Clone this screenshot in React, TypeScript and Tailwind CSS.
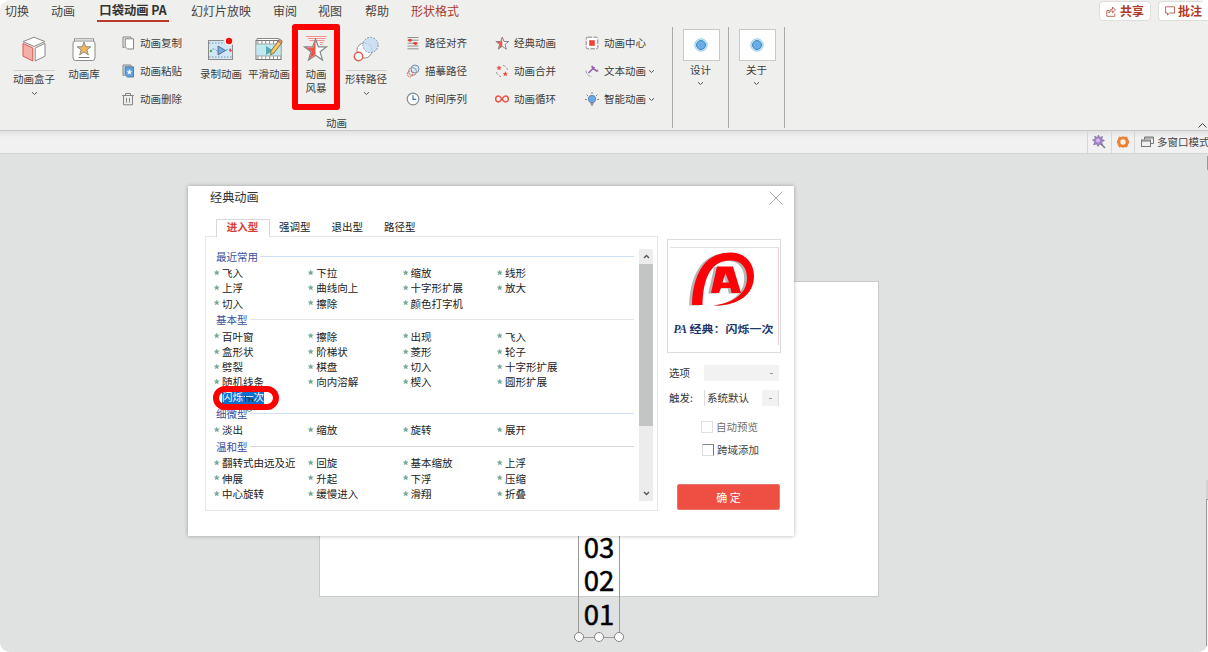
import React from "react";

const FONT = "font-['Noto_Sans_CJK_SC','Noto_Sans',sans-serif]";

function Chevron({ className = "" }: { className?: string }) {
  return (
    <svg className={`block h-[5px] w-[7px] shrink-0 ${className}`} viewBox="0 0 7 5" fill="none" stroke="#555" strokeWidth="1">
      <path d="M1 1.2 3.5 3.5 6 1.2" />
    </svg>
  );
}

const STAR = "M0-10 2.6-3.2 9.8-3.2 4.1 1.2 6.2 8.4 0 4.2-6.2 8.4-4.1 1.2-9.8-3.2-2.6-3.2Z";

const CubeIcon = () => (
  <svg width="26" height="26" viewBox="0 0 26 26" strokeLinejoin="round">
    <path d="M13 1.2 24 5.6 13 10.4 2 5.6Z" fill="#fff" stroke="#8a8a8a" />
    <path d="M14.2 12 24 7.4V20.2L14.2 25Z" fill="#fff" stroke="#8a8a8a" />
    <path d="M2 7.4 11.8 12V25L2 20.2Z" fill="#f3b0a9" stroke="#e2584c" />
  </svg>
);
const LibraryIcon = () => (
  <svg width="26" height="26" viewBox="0 0 26 26" fill="#fff" stroke="#8a8a8a">
    <path d="M3.5 5V2.8H22.5V5" />
    <rect x="2" y="5" width="22" height="19.5" rx="2.5" />
    <path transform="translate(13 13) scale(.7)" d={STAR} fill="#f2b95a" stroke="#8a8a8a" strokeWidth="1.4" />
    <path d="M7.5 21.5H18.5" stroke="#777" />
  </svg>
);
const RecordIcon = () => (
  <svg width="28" height="26" viewBox="0 0 28 26">
    <rect x="1.5" y="4.5" width="24" height="19" fill="#cfe7f7" stroke="#8a8a8a" />
    <path d="M2 7H25M2 21H25" stroke="#9fb0ba" strokeDasharray="1.5 1.5" strokeWidth="1.6" />
    <path d="M3 16Q6 11 9 14T17 15T24 13" fill="none" stroke="#4f86b8" strokeDasharray="2 1.5" />
    <path d="M11 10V19L18.5 14.5Z" fill="#6fb0e2" stroke="#557" strokeWidth=".8" />
    <circle cx="4" cy="15" r="1.2" fill="#4caf50" />
    <circle cx="23.5" cy="14.5" r="1.2" fill="#f33" />
    <circle cx="22" cy="5" r="5" fill="#fbf6f5" stroke="#ddd" strokeWidth=".6" />
    <circle cx="22" cy="5" r="3.2" fill="#f20d0d" />
  </svg>
);
const SmoothIcon = () => (
  <svg width="28" height="26" viewBox="0 0 28 26">
    <path d="M2 4V2.5H24V4" fill="#fff" stroke="#8a8a8a" />
    <rect x="1" y="4.5" width="25" height="19" fill="#fff" stroke="#777" />
    <rect x="1.5" y="8" width="24" height="12" fill="#bfe9ef" />
    <path d="M1 8H26M1 20H26" stroke="#888" strokeWidth=".7" />
    <path d="M2.5 6.2H26M2.5 21.8H26" stroke="#888" strokeWidth="3" strokeDasharray=".9 3" />
    <path d="M11 10V19L18 14.5Z" fill="#55a9b2" />
    <path d="M23.5 4.8 26.5 7.2 19 17 15.6 18.8 16 14.8Z" fill="#f6c665" stroke="#80663d" strokeWidth=".9" />
    <path d="M23.2 5.2 24.6 3.5Q26.6 3.5 27.4 5.8L26.2 7.5Z" fill="#e98f7d" stroke="#80663d" strokeWidth=".7" />
  </svg>
);
const StormIcon = () => (
  <svg width="26" height="27" viewBox="0 0 26 27">
    <path d="M3 1.5H23.500M5 3.500H22.500M6.500 5.500H21.500M17 7.500H20.500M17 9.500H19.500" stroke="#f0938c" strokeWidth="1.2" />
    <g transform="translate(12.500 15.5) scale(1.12)">
      <path d={STAR} fill="#fff" stroke="#858585" strokeWidth="1.1" />
      <path d="M0-9.2V3.6L-5.4 7.2-3.5 1-8.6-2.7-2.1-2.7Z" fill="#ee5549" />
    </g>
  </svg>
);
const ShapePathIcon = () => (
  <svg width="28" height="27" viewBox="0 0 28 27">
    <circle cx="12.500" cy="14.500" r="7.6" fill="#fff" stroke="#909090" />
    <circle cx="18.5" cy="9" r="7.6" fill="#c4dcf4" fillOpacity=".8" stroke="#8098b0" strokeDasharray="2 1.2" />
    <circle cx="6.5" cy="20.5" r="4.2" fill="#fff" stroke="#ea5a4f" strokeWidth="1.4" />
  </svg>
);

const smallIcons: Record<string, React.ReactNode> = {
  copy: (
    <g fill="#fff" stroke="#858585">
      <path d="M10 2V1H2V11.5H3.5" fill="none" />
      <path d="M4.2 2.8H12.5V13H6.5L4.2 11Z" />
    </g>
  ),
  paste: (
    <g stroke="#858585">
      <path d="M10 2V1H2V11.5H3.5" fill="#d8d8d8" />
      <path d="M4.2 2.8H12.5V13H6.5L4.2 11Z" fill="#5d9fe0" stroke="#557ea8" />
      <path transform="translate(8.400 8) scale(.27)" d={STAR} fill="#fff" stroke="#fff" />
    </g>
  ),
  trash: (
    <g fill="none" stroke="#858585">
      <path d="M1.2 3.5H12.8M4.5 3.2V1.5H9.5V3.2M2.5 3.8V12.8H11.5V3.8M5.5 6V10.5M8.5 6V10.5" />
    </g>
  ),
  align: (
    <g fill="none" stroke="#858585">
      <path d="M1.5 1.5H12.5M1.5 4.2H12.5M1.5 7.2H12.5M1.5 10H12.5M1.5 12.8H12.5" strokeWidth=".9" />
      <path d="M2 4.2H6M7 7.2H11" stroke="#e94036" strokeWidth="1.500" />
      <circle cx="4" cy="4.2" r="1.5" fill="#e94036" stroke="none" />
      <circle cx="9.5" cy="7.4" r="1.5" fill="#e94036" stroke="none" />
    </g>
  ),
  trace: (
    <g fill="none">
      <circle cx="9" cy="5" r="4" fill="#d9e6f4" stroke="#7892b2" />
      <circle cx="6.5" cy="7.5" r="4" stroke="#999" />
      <circle cx="4" cy="10" r="2.8" stroke="#ea5a4f" strokeDasharray="2 .8" />
    </g>
  ),
  clock: (
    <g fill="#fff" stroke="#858b92">
      <circle cx="7" cy="7" r="5.8" strokeWidth="1.2" />
      <path d="M7 3.2V7.3H10.3" fill="none" stroke="#3e7ab8" strokeWidth="1.2" />
    </g>
  ),
  star: (
    <g transform="translate(7.300 7.6) scale(.66)">
      <path d={STAR} fill="#fff" stroke="#858585" strokeWidth="1.5" />
      <path d="M0-9V4L-5.4 7.2-3.5 1-8.6-2.7-2.1-2.7Z" fill="#ee5549" />
    </g>
  ),
  merge: (
    <g fill="none" stroke="#9a9a9a">
      <path d="M8 1.3A6 6 0 0 1 12.5 6M1.5 8A6 6 0 0 0 6 12.7" strokeDasharray="3 1.4" />
      <path transform="translate(4 4) scale(.24)" d={STAR} fill="#ed3f35" stroke="#ed3f35" />
      <path transform="translate(10.3 10) scale(.24)" d={STAR} fill="#ed3f35" stroke="#ed3f35" />
    </g>
  ),
  loop: (
    <path
      d="M7 7C5.5 5 4.8 4 3.6 4A3 3 0 0 0 3.6 10C4.8 10 5.5 9 7 7S9.200 4 10.4 4A3 3 0 0 1 10.4 10C9.200 10 8.500 9 7 7Z"
      fill="none"
      stroke="#e95247"
      strokeWidth="1.5"
    />
  ),
  center: (
    <g>
      <rect x="1.200" y="1.200" width="11.600" height="11.600" rx="1.500" fill="#fff" stroke="#858585" strokeDasharray="4.5 1.2" />
      <rect x="4.200" y="4.200" width="5.600" height="5.600" fill="#f04437" />
    </g>
  ),
  text: (
    <g fill="none">
      <path d="M1 6.500A6.200 6.200 0 0 0 6.500 12.600M13 7.500 12.500 5.500" stroke="#999" strokeDasharray="3 1" />
      <path d="M3.500 9 9.500 3M6.800 1.800 8 4.500 12.500 7.500" stroke="#9561b5" strokeWidth="1.700" />
    </g>
  ),
  bulb: (
    <g>
      <path d="M7 0V2M1.500 2.500 3 4M12.500 2.500 11 4M0 7.500H2M12 7.500H14" stroke="#888" />
      <circle cx="7" cy="7" r="3.700" fill="#65a9e8" stroke="#5b7fa5" strokeWidth=".8" />
      <path d="M5.400 11.200H8.600M5.800 12.900H8.200" stroke="#777" strokeWidth="1.200" />
    </g>
  ),
};

function SmallColumn({ items, className }: { items: [string, string, boolean?][]; className: string }) {
  return (
    <div className={`flex shrink-0 flex-col pt-[7px] ${className}`}>
      {items.map(([icon, label, menu]) => (
        <button key={label} className="flex h-7 items-center whitespace-nowrap">
          <svg className="mr-[5px] shrink-0" width="14" height="14" viewBox="0 0 14 14">
            {smallIcons[icon]}
          </svg>
          <span>{label}</span>
          {menu && <Chevron className="ml-[2px]" />}
        </button>
      ))}
    </div>
  );
}

function LargeButton({ icon, label, split, className }: { icon: React.ReactNode; label: string; split?: boolean; className: string }) {
  return (
    <button className={`flex shrink-0 flex-col items-center whitespace-nowrap pt-[13px] leading-[14px] ${className}`}>
      <span className="flex h-7 items-center">{icon}</span>
      {split ? (
        <>
          <span className="mt-[7px] h-px w-[41px] bg-[#cfcfcf]" />
          <span className="mt-[1px]">{label}</span>
          <Chevron className="mt-[5px]" />
        </>
      ) : (
        <span className="mt-1">{label}</span>
      )}
    </button>
  );
}

function GalleryButton({ label }: { label: string }) {
  return (
    <div className="mt-[5px] flex h-[101px] w-14 shrink-0 flex-col items-center border-r border-[#a9a9a9] pt-[2px]">
      <div className="ml-px flex h-[32px] w-[37px] items-center justify-center border border-[#c9c9c6] bg-white">
        <svg width="14" height="14" viewBox="0 0 14 14">
          <circle cx="7" cy="7" r="6.200" fill="#d9f0fa" stroke="#8fc8e3" />
          <circle cx="7" cy="7" r="4.500" fill="#69aee8" stroke="#3f85bd" />
        </svg>
      </div>
      <span className="mt-[2px] leading-[14px]">{label}</span>
      <Chevron className="mt-[4px]" />
    </div>
  );
}

const tabs: [string, string][] = [
  ["切换", "ml-[5px]"],
  ["动画", "ml-[22px]"],
  ["口袋动画 PA", "ml-[22px]"],
  ["幻灯片放映", "ml-[22px]"],
  ["审阅", "ml-[22px]"],
  ["视图", "ml-[21px]"],
  ["帮助", "ml-[23px]"],
  ["形状格式", "ml-[22px]"],
];

function TabBar() {
  return (
    <div className="flex h-[22px] shrink-0 text-[12px] leading-[21px] text-[#444]">
      {tabs.map(([label, ml], i) => (
        <div
          key={label}
          className={`shrink-0 whitespace-nowrap ${ml} ${
            i === 2 ? "h-[21.500px] w-[72px] border-b-2 border-[#b83b2a] text-center text-[12.300px] font-bold text-[#333]" : i === 7 ? "text-[#a93a2b]" : ""
          }`}
        >
          {label}
        </div>
      ))}
      <div className="ml-auto flex shrink-0 gap-[7px] pt-px font-bold text-[#b03a2a]">
        <div className="flex h-5 w-[52px] items-center justify-center gap-[4px] rounded-sm border border-[#dededc] bg-white">
          <svg width="10" height="11" viewBox="0 0 10 11" fill="none" stroke="#b85a4d" strokeWidth=".9">
            <path d="M3 4.500H.8V10.300H8.800V7.500M2.800 7C3 4.500 4.500 3.200 6.500 3.200V1L9.500 4 6.500 6.800V4.900C4.800 4.900 3.500 5.500 2.800 7Z" />
          </svg>
          <span className="-mt-[2px]">共享</span>
        </div>
        <div className="flex h-5 w-[50px] items-center gap-[3px] whitespace-nowrap rounded-l-sm border border-r-0 border-[#dededc] bg-white pl-[6px]">
          <svg className="shrink-0" width="10" height="10" viewBox="0 0 10 10" fill="none" stroke="#b85a4d" strokeWidth=".9">
            <path d="M.6.8H9.500V7H4.500L2.500 9.200V7H.6Z" />
          </svg>
          <span className="-mt-[2px]">批注</span>
        </div>
      </div>
    </div>
  );
}

function Ribbon() {
  return (
    <div className="flex h-[109px] shrink-0 border-b border-[#c6c6c6] text-[10.500px] leading-[14px] text-[#3c3c3c]">
      <div className="flex w-[673px] shrink-0 flex-col">
        <div className="flex h-[92px]">
          <LargeButton className="ml-[13px] w-[42px]" icon={<CubeIcon />} label="动画盒子" split />
          <LargeButton className="ml-[12px] w-[34px]" icon={<LibraryIcon />} label="动画库" />
          <SmallColumn className="ml-[20px] w-[61px]" items={[["copy", "动画复制"], ["paste", "动画粘贴"], ["trash", "动画删除"]]} />
          <LargeButton className="ml-[18px] w-[42px]" icon={<RecordIcon />} label="录制动画" />
          <LargeButton className="ml-[6px] w-[42px]" icon={<SmoothIcon />} label="平滑动画" />
          <button className="ml-[2px] mt-[2px] flex h-[86px] w-[48px] shrink-0 flex-col items-center rounded-[3px] border-[6px] border-[#fe0000] pt-[5px]">
            <StormIcon />
            <span className="mt-[5px] w-[22px] leading-[14px]">动画风暴</span>
          </button>
          <LargeButton className="ml-[5px] w-[42px]" icon={<ShapePathIcon />} label="形转路径" split />
          <SmallColumn className="ml-[19px] w-[61px]" items={[["align", "路径对齐"], ["trace", "描摹路径"], ["clock", "时间序列"]]} />
          <SmallColumn className="ml-[28px] w-[62px]" items={[["star", "经典动画"], ["merge", "动画合并"], ["loop", "动画循环"]]} />
          <SmallColumn className="ml-[28px] w-[72px]" items={[["center", "动画中心"], ["text", "文本动画", true], ["bulb", "智能动画", true]]} />
        </div>
        <div className="text-center leading-[19px]">动画</div>
      </div>
      <div className="mt-[5px] h-[101px] w-px shrink-0 -ml-px bg-[#a9a9a9]" />
      <GalleryButton label="设计" />
      <GalleryButton label="关于" />
      <div className="flex grow items-end justify-end">
        <svg className="mb-px" width="11" height="7" viewBox="0 0 11 7" fill="none" stroke="#444">
          <path d="M1.500 5.500 5.500 1.500 9.500 5.500" />
        </svg>
      </div>
    </div>
  );
}

function ModeBar() {
  return (
    <div className="flex h-[23px] shrink-0 justify-end border-b border-[#d4d4d4] bg-gradient-to-b from-[#e2e2e2] to-[#f1f1f1] to-30% text-[10.500px] text-[#444]">
      <div className="flex w-6 items-center justify-center border-l border-[#d6d6d6] pr-[2px]">
        <svg width="14" height="14" viewBox="0 0 14 14">
          <path d="M8 8 13 13" stroke="#858585" strokeWidth="1.700" />
          <path d="M6.500 0 7.600 2.500 10.500 1.500 9.700 4.200 12.500 5.500 9.700 7 10.500 10 7.600 9 6 11.500 4.700 9 1.500 9.700 3 7 .5 5 3.200 4 2.700 1.300 5.400 2.500Z" fill="#a284cf" stroke="#776694" strokeWidth=".6" />
          <circle cx="6" cy="5.500" r="2" fill="#d8b8f3" />
        </svg>
      </div>
      <div className="flex w-6 items-center justify-center border-x border-[#d6d6d6] pr-px">
        <svg className="shrink-0" width="14" height="14" viewBox="0 0 14 14">
          <path d="M3 1.500 5 2 7 1.200 9 2 11 1.500 12 4 13.300 7 12 10 11 12.500 9 12 7 12.800 5 12 3 12.500 2 10 .7 7 2 4Z" fill="#ed8133" />
          <circle cx="7" cy="7" r="2.700" fill="#f5f2ef" />
        </svg>
      </div>
      <div className="flex w-[73px] items-center gap-[3px] overflow-hidden whitespace-nowrap pl-[6px]">
        <svg className="shrink-0" width="13" height="12" viewBox="0 0 13 12" fill="none" stroke="#777">
          <path d="M3.500 3.500V1H12.500V7.500H10M3.500 2H12.500" />
          <rect x=".5" y="4" width="9" height="6.500" />
          <path d="M.5 5H9.500" />
        </svg>
        多窗口模式
      </div>
    </div>
  );
}

const sections: { title: string; line: string; rows: string[][] }[] = [
  {
    title: "最近常用",
    line: "bg-[#cfe0f6]",
    rows: [
      ["飞入", "下拉", "缩放", "线形"],
      ["上浮", "曲线向上", "十字形扩展", "放大"],
      ["切入", "擦除", "颜色打字机"],
    ],
  },
  {
    title: "基本型",
    line: "bg-[#e2e5e9]",
    rows: [
      ["百叶窗", "擦除", "出现", "飞入"],
      ["盒形状", "阶梯状", "菱形", "轮子"],
      ["劈裂", "棋盘", "切入", "十字形扩展"],
      ["随机线条", "向内溶解", "楔入", "圆形扩展"],
      ["闪烁一次"],
    ],
  },
  { title: "细微型", line: "bg-[#cfe0f6]", rows: [["淡出", "缩放", "旋转", "展开"]] },
  {
    title: "温和型",
    line: "bg-[#d5d7da]",
    rows: [
      ["翻转式由远及近", "回旋", "基本缩放", "上浮"],
      ["伸展", "升起", "下浮", "压缩"],
      ["中心旋转", "缓慢进入", "滑翔", "折叠"],
    ],
  },
];

function Effect({ name }: { name: string }) {
  const selected = name === "闪烁一次";
  return (
    <div className="relative flex w-[94.300px] shrink-0 items-center whitespace-nowrap">
      <svg className="ml-px mr-[2.500px] shrink-0" width="5.500" height="5.500" viewBox="-10 -10 20 20">
        <path d={STAR} fill="#71a894" stroke="#71a894" strokeWidth="1" />
      </svg>
      <span className={selected ? "bg-[#0f6fd2] leading-[14px] text-white" : ""}>{name}</span>
      {selected && (
        <>
          <div className="absolute left-0 -top-[4.500px] h-[24px] w-[66px] rounded-full border-[6.500px] border-[#fe0000]" />
          <svg className="absolute left-[31px] top-[5px]" width="15" height="20" viewBox="0 0 15 20" fill="none">
            <path d="M1.500 .5V7M3 2.500H5V7M5 4H8.500V7" stroke="#333" strokeWidth="1" />
            <path d="M1 13.500Q5.500 20 10 12.500" stroke="#666" strokeWidth=".8" />
          </svg>
        </>
      )}
    </div>
  );
}

function EffectList() {
  return (
    <div className="flex h-[275px] w-[453px] border border-[#e6e6e6]">
      <div className="mt-[10.500px] w-[433px] shrink-0 pl-[7px] text-[10.500px] text-[#222]">
        {sections.map((s) => (
          <div key={s.title}>
            <div className="flex h-[17.600px] items-center pl-[3px] pr-[5px] leading-[17px] text-[#3a4f9c]">
              {s.title}
              <span className={`ml-[2px] h-px grow ${s.line}`} />
            </div>
            {s.rows.map((row) => (
              <div key={row[0]} className="flex h-[15.250px] items-center leading-[15px]">
                {row.map((name) => (
                  <Effect key={name} name={name} />
                ))}
              </div>
            ))}
          </div>
        ))}
      </div>
      <div className="mt-[12px] flex h-[252px] w-[14px] flex-col items-center bg-[#ececec]">
        <svg className="my-[5px] shrink-0" width="7" height="5" viewBox="0 0 7 5" fill="none" stroke="#555" strokeWidth="1.400">
          <path d="M1 4 3.500 1.500 6 4" />
        </svg>
        <div className="h-[162px] w-full bg-[#c3c4c4]" />
        <svg className="mb-[5px] mt-auto" width="7" height="5" viewBox="0 0 7 5" fill="none" stroke="#555" strokeWidth="1.400">
          <path d="M1 1 3.500 3.500 6 1" />
        </svg>
      </div>
    </div>
  );
}

function Preview() {
  return (
    <div className="h-[114px] w-[114px] border border-[#dcdcdc] pl-[2px] pt-[7px]">
      <div className="flex h-[98px] w-[109px] flex-col items-center border-r border-t border-r-[#e8cfd4] border-t-[#e2e2e2]">
        <svg className="mr-[4px] mt-[4px] shrink-0" width="68" height="56" viewBox="688 252 68 56">
          <g transform="translate(-2.800 .6)" fill="#b5b5b5">
            <path d="M692 305C692 288 697 271 706 262C713 255 722 252.500 731 252.500C745 252.500 754 263 754 276C754 295 738 306 716 305.500C733 303 747 294 747 278C747 266 740 260.500 730 260.500C713 260.500 703 275 702.500 305Z" />
            <path d="M717 266.500H733L741 293H731.500L730.500 288H721L719 293H711ZM725.500 273 722.500 282.500H729Z" fillRule="evenodd" />
          </g>
          <path d="M692 305C692 288 697 271 706 262C713 255 722 252.500 731 252.500C745 252.500 754 263 754 276C754 295 738 306 713 305.500C733 303 747 294 747 278C747 266 740 260.500 730 260.500C713 260.500 703 275 702.500 305Z" fill="#fe0008" />
          <path d="M717 266.500H733L741 293H731.500L730.500 288H721L719 293H711ZM725.500 273 722.500 282.500H729Z" fill="#fe0008" fillRule="evenodd" />
        </svg>
        <div className="mt-[12px] flex items-center whitespace-nowrap text-[12px] font-bold leading-[18px] text-[#20376b]">
          <span className="w-[16px] font-['Liberation_Serif',serif] text-[11.500px] italic tracking-[-0.5px]">PA</span>
          <span className="inline-block w-[85px] scale-y-[.82]">经典：闪烁一次</span>
        </div>
      </div>
    </div>
  );
}

function Dialog() {
  return (
    <div className="absolute left-[188px] top-[32px] flex h-[350px] w-[606px] flex-col bg-white shadow-[0_0_4px_rgba(0,0,0,0.3)]">
      <div className="flex h-[33px] shrink-0 justify-between pl-[22px] pr-[11px]">
        <span className="text-[12.200px] leading-[22px] text-[#333]">经典动画</span>
        <svg className="mt-[5px]" width="14" height="14" viewBox="0 0 14 14" stroke="#aaa" fill="none">
          <path d="M.5.5 13.500 13.500M13.500.5.5 13.500" />
        </svg>
      </div>
      <div className="flex pl-[17px]">
        <div className="w-[453px] shrink-0">
          <div className="flex h-[17px] pl-[11px] text-[10.500px] leading-[16px] text-[#222]">
            <span className="relative z-10 -mb-px w-[54px] border border-b-0 border-[#d8d8d8] bg-white pr-px text-center font-bold leading-[14px] text-[#d9403a]">进入型</span>
            <span className="ml-[9px]">强调型</span>
            <span className="ml-[21px]">退出型</span>
            <span className="ml-[21px]">路径型</span>
          </div>
          <EffectList />
        </div>
        <div className="ml-[9px] mt-[20px] w-[114px] shrink-0 text-[10.500px] text-[#333]">
          <Preview />
          <div className="mt-[12px] flex h-4 items-center pl-[2px]">
            <span className="w-[35px]">选项</span>
            <span className="flex h-4 w-[75px] items-center justify-end bg-[#f2f2f2] pr-[6px]">
              <span className="h-px w-[3px] bg-[#999]" />
            </span>
          </div>
          <div className="mt-[9px] flex h-4 items-center pl-[2px]">
            <span className="w-[35px]">触发:</span>
            <span className="flex h-4 w-[75px] items-center justify-between border-x border-[#dcdcdc] pl-[2px] leading-4">
              系统默认
              <span className="flex h-4 w-4 items-center justify-center bg-[#f2f2f2]">
                <span className="h-px w-[3px] bg-[#999]" />
              </span>
            </span>
          </div>
          <div className="mt-[13px] flex h-4 items-center gap-[3px] pl-[34px] text-[#707070]">
            <span className="h-[12px] w-[12px] border border-[#e0e0e0]" />
            自动预览
          </div>
          <div className="mt-[7px] flex h-4 items-center gap-[3px] pl-[35px] text-[#444]">
            <span className="h-[12px] w-[12px] border border-b-[#ddd] border-l-[#ddd] border-r-[#777] border-t-[#888]" />
            跨域添加
          </div>
          <button className="ml-[10px] mt-[26px] flex h-[26px] w-[103px] items-center justify-center rounded-[2px] border border-[#e5776e] bg-[#ef4e42] text-[11px] text-white">
            确 定
          </button>
        </div>
      </div>
    </div>
  );
}

function Canvas() {
  return (
    <div className="relative grow overflow-hidden bg-[#e0e1e1]">
      <div className="absolute left-[319px] top-[127px] h-[316px] w-[560px] border border-[#c8c9c9] bg-white" />
      <div className="absolute left-[578px] top-[300px] flex h-[184px] w-[42px] flex-col justify-end border border-[#9a9a9a] pb-[7px] text-center text-[27.500px] font-normal leading-[33.500px] text-black [-webkit-text-stroke:0.500px_black]">
        <span>03</span>
        <span>02</span>
        <span>01</span>
        <div className="absolute -bottom-[5px] -left-[5px] flex w-[50px] justify-between">
          <i className="h-[10px] w-[10px] rounded-full border-[1.500px] border-[#858585] bg-white" />
          <i className="h-[10px] w-[10px] rounded-full border-[1.500px] border-[#858585] bg-white" />
          <i className="h-[10px] w-[10px] rounded-full border-[1.500px] border-[#858585] bg-white" />
        </div>
      </div>
      <Dialog />
      <div className="absolute right-0 top-[2px] h-[14px] w-px bg-[#999]" />
      <div className="absolute right-0 top-[326px] h-[19px] w-[2px] bg-[#d2d2d2]" />
      <div className="absolute right-0 top-[345px] h-[147px] w-[2px] border-l border-t border-[#999] bg-[#f4f4f4]" />
    </div>
  );
}

export default function App() {
  return (
    <div className="h-[652px] w-[1208px] bg-white">
      <div className={`flex h-full w-full flex-col overflow-hidden rounded-[10px] bg-[#efefed] ${FONT}`}>
        <TabBar />
        <Ribbon />
        <ModeBar />
        <Canvas />
      </div>
    </div>
  );
}
